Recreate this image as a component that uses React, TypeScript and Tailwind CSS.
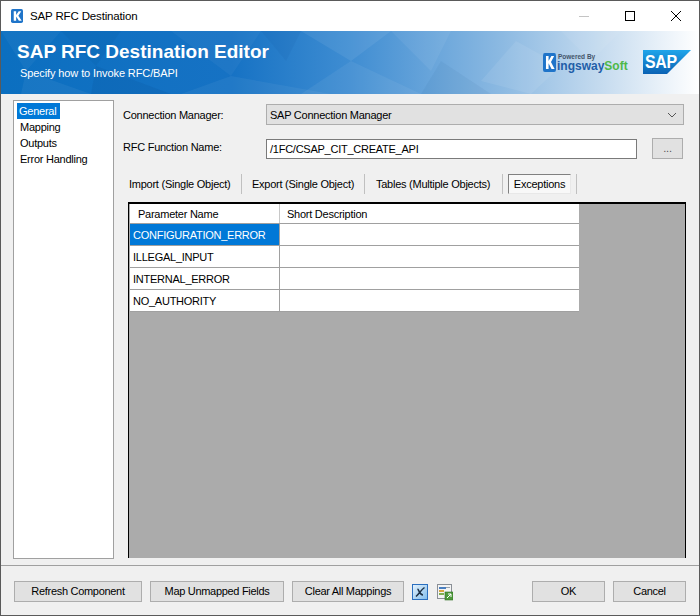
const font = "font-['Liberation_Sans',sans-serif]";

function Btn({ w, children }: { w: string; children: React.ReactNode }) {
  return (
    <button className={`${w} h-[21px] shrink-0 bg-[#e1e1e1] border border-[#adadad] text-[11px] tracking-[-0.3px] leading-[17px] text-black`}>
      {children}
    </button>
  );
}

function BannerArt() {
  return (
    <svg className="absolute inset-0" width="698" height="63" viewBox="0 0 698 63" preserveAspectRatio="none">
      <defs>
        <linearGradient id="bg" x1="0" x2="1" y1="0" y2="0">
          <stop offset="0" stopColor="#0b6fc0" />
          <stop offset="0.33" stopColor="#1672c4" />
          <stop offset="0.5" stopColor="#3f8dd2" />
          <stop offset="0.72" stopColor="#8dbae2" />
          <stop offset="0.86" stopColor="#c5dbef" />
          <stop offset="1" stopColor="#ffffff" />
        </linearGradient>
      </defs>
      <rect width="698" height="63" fill="url(#bg)" />
      <g fill="#ffffff">
        <polygon points="0,0 60,0 25,40" opacity="0.04" />
        <polygon points="25,40 90,63 20,63" opacity="0.05" />
        <polygon points="170,0 260,0 230,45" opacity="0.04" />
        <polygon points="230,45 330,63 180,63" opacity="0.05" />
        <polygon points="300,0 350,30 390,0" opacity="0.07" />
        <polygon points="350,30 420,63 300,63" opacity="0.06" />
        <polygon points="390,0 450,0 430,40" opacity="0.06" />
        <polygon points="515,10 560,35 530,63 480,50" opacity="0.08" />
        <polygon points="560,0 620,0 590,30" opacity="0.06" />
      </g>
      <g fill="#003a7a">
        <polygon points="60,0 120,0 95,35" opacity="0.08" />
        <polygon points="95,35 170,63 90,63" opacity="0.1" />
        <polygon points="260,0 300,0 285,30" opacity="0.06" />
        <polygon points="440,30 490,63 420,63" opacity="0.05" />
      </g>
    </svg>
  );
}

function KLogo({ w, h }: { w: number; h: number }) {
  return (
    <svg width={w} height={h} viewBox="0 0 14 16" preserveAspectRatio="none" className="shrink-0">
      <rect x="0" y="0" width="14" height="16" rx="2" fill="#1f74c9" />
      <path d="M3.2 2.5h2.8v4.3l3-4.3h3L8.6 7.6l3.9 5.9H9.2L6 8.6v4.9H3.2z" fill="#fff" />
    </svg>
  );
}

function SapLogo() {
  return (
    <svg width="48" height="24" viewBox="0 0 48 24">
      <defs>
        <linearGradient id="sap" x1="0" x2="0" y1="0" y2="1">
          <stop offset="0" stopColor="#1fa5ea" />
          <stop offset="1" stopColor="#0a62b4" />
        </linearGradient>
      </defs>
      <polygon points="0,0 48,0 24,24 0,24" fill="url(#sap)" />
      <text x="2" y="18" fontFamily="Liberation Sans" fontWeight="700" fontSize="18" textLength="32" lengthAdjust="spacingAndGlyphs" fill="#fff">SAP</text>
    </svg>
  );
}

const rows = ["CONFIGURATION_ERROR", "ILLEGAL_INPUT", "INTERNAL_ERROR", "NO_AUTHORITY"];
const body = "text-[11px] tracking-[-0.25px]";

export default function App() {
  return (
    <div className={`w-[700px] h-[616px] bg-[#f0f0f0] border border-[#5a5a5a] flex flex-col overflow-hidden text-black ${body} ${font}`}>
      <div className="h-[30px] bg-white flex items-center shrink-0 relative">
        <div className="ml-[10px] mr-[7px]"><KLogo w={12} h={14} /></div>
        <span className="text-[11.5px] tracking-[-0.15px] pt-[1px]">SAP RFC Destination</span>
        <div className="ml-auto flex items-center h-full">
          <div className="w-[46px] flex justify-center"><div className="w-[10px] h-px bg-[#c4c4c4]" /></div>
          <div className="w-[46px] flex justify-center"><div className="w-[10px] h-[10px] border border-black" /></div>
          <div className="w-[46px] flex justify-center">
            <svg width="10" height="10" viewBox="0 0 10 10"><path d="M0 0L10 10M10 0L0 10" stroke="#000" strokeWidth="1" /></svg>
          </div>
        </div>
      </div>

      <div className="h-[63px] relative shrink-0 overflow-hidden">
        <BannerArt />
        <div className="relative pl-[16px] pt-[10px] text-white tracking-normal">
          <div className="font-bold text-[19px] leading-[22px]">SAP RFC Destination Editor</div>
          <div className="pl-[3px] text-[11px] tracking-[-0.1px] leading-[16px] mt-[2px]">Specify how to Invoke RFC/BAPI</div>
        </div>
        <div className="absolute left-[542px] top-[22px] flex items-end tracking-normal">
          <KLogo w={13} h={19} />
          <div className="ml-[1px] flex flex-col font-bold">
            <span className="pl-[1px] text-[6.5px] leading-[7px] text-[#44546a]">Powered By</span>
            <span className="text-[12px] leading-[12px] text-[#1f5ea8]">ingsway<span className="text-[#4fb848]">Soft</span></span>
          </div>
        </div>
        <div className="absolute left-[642px] top-[19px]"><SapLogo /></div>
      </div>

      <div className="flex-1 min-h-0 flex px-[12px] pt-[6px]">
        <div className="w-[101px] h-[459px] shrink-0 bg-white border border-[#a0a0a0] pl-[3px] pt-[2px] flex flex-col items-start">
          <div className="h-[16px] leading-[16px] bg-[#0078d7] text-white pl-[2px] pr-[4px]">General</div>
          <div className="h-[16px] leading-[16px] pl-[3px]">Mapping</div>
          <div className="h-[16px] leading-[16px] pl-[3px]">Outputs</div>
          <div className="h-[16px] leading-[16px] pl-[3px]">Error Handling</div>
        </div>

        <div className="flex-1 min-w-0 ml-[14px] flex flex-col">
          <div className="flex items-center h-[21px] mt-[4px]">
            <span className="w-[143px] -ml-[5px] shrink-0 pt-[1px]">Connection Manager:</span>
            <div className="w-[418px] h-[21px] bg-[#e1e1e1] border border-[#adadad] flex items-center pl-[3px] pr-[6px]">
              <span className="flex-1 pt-[1px]">SAP Connection Manager</span>
              <svg width="10" height="6" viewBox="0 0 10 6"><path d="M1 1L5 5L9 1" fill="none" stroke="#555" strokeWidth="1" /></svg>
            </div>
          </div>

          <div className="flex items-center h-[21px] mt-[13px]">
            <span className="w-[143px] -ml-[5px] shrink-0 -mt-[3px]">RFC Function Name:</span>
            <div className="w-[371px] h-[20px] mt-[1px] bg-white border border-[#7a7a7a] flex items-center pl-[3px]">/1FC/CSAP_CIT_CREATE_API</div>
            <button className="ml-[15px] -mt-[1px] w-[31px] h-[21px] bg-[#e1e1e1] border border-[#adadad] text-[#555] text-[11px] leading-[16px]">...</button>
          </div>

          <div className="flex items-stretch h-[20px] mt-[15px] whitespace-nowrap">
            <div className="flex items-center pl-[1px] w-[114px] border-r border-[#c0c0c0]">Import (Single Object)</div>
            <div className="flex items-center pl-[10px] w-[123px] border-r border-[#c0c0c0]">Export (Single Object)</div>
            <div className="flex items-center pl-[11px] w-[138px] border-r border-[#c0c0c0]">Tables (Multiple Objects)</div>
            <div className="ml-[5px] flex items-center justify-center w-[63px] bg-[#f8f8f8] border border-[#808080] border-r-[#e8e8e8] border-b-[#e8e8e8] pt-[1px]">Exceptions</div>
            <div className="ml-[5px] w-px bg-[#c0c0c0]" />
          </div>

          <div className="mt-[8px] w-[558px] h-[356px] bg-[#ababab] border-t-2 border-x border-black pl-[1px]">
            <div className="w-[449px] bg-white">
              <div className="flex h-[20px] border-b border-[#a0a0a0]">
                <div className="w-[150px] pl-[8px] leading-[20px] border-r border-[#c8c8c8]">Parameter Name</div>
                <div className="pl-[7px] leading-[20px]">Short Description</div>
              </div>
              {rows.map((r, i) => (
                <div key={r} className="flex h-[22px] border-b border-[#a0a0a0]">
                  <div className={`w-[150px] pl-[3px] leading-[22px] border-r border-[#a0a0a0] ${i === 0 ? "bg-[#0078d7] text-white" : ""}`}>{r}</div>
                  <div className="flex-1" />
                </div>
              ))}
            </div>
          </div>
        </div>
      </div>

      <div className="h-px bg-[#a0a0a0] shrink-0 mb-[15px]" />
      <div className="flex items-center h-[21px] px-[13px] mb-[13px] shrink-0">
        <Btn w="w-[128px]">Refresh Component</Btn>
        <div className="w-[8px]" />
        <Btn w="w-[134px]">Map Unmapped Fields</Btn>
        <div className="w-[8px]" />
        <Btn w="w-[112px]">Clear All Mappings</Btn>
        <div className="w-[8px]" />
        <svg width="16" height="16" viewBox="0 0 16 16" className="shrink-0 mt-[1px]">
          <defs>
            <linearGradient id="xb" x1="0" x2="1" y1="0" y2="1">
              <stop offset="0" stopColor="#e6f3fd" />
              <stop offset="1" stopColor="#7fbcec" />
            </linearGradient>
          </defs>
          <rect x="0.5" y="0.5" width="15" height="15" fill="url(#xb)" stroke="#2a6fc0" />
          <path d="M4 12.5C7 10 9 6 12.5 3.5M5.5 5C7 5.5 7.5 11 11 11" fill="none" stroke="#1d3146" strokeWidth="1.5" />
        </svg>
        <div className="w-[9px]" />
        <svg width="16" height="17" viewBox="0 0 16 17" className="shrink-0 mt-[1px]">
          <rect x="0.5" y="0.5" width="14" height="14" fill="#f4f4f4" stroke="#8a8f96" />
          <rect x="2" y="3" width="7" height="2" fill="#4a7fc0" />
          <rect x="2" y="6" width="5" height="2" fill="#d9a441" />
          <rect x="2" y="9" width="5" height="2" fill="#7fb04f" />
          <rect x="9" y="3" width="4" height="1" fill="#9aa3ad" />
          <rect x="8" y="8" width="8" height="8" fill="#4f9a3c" stroke="#2f6f24" strokeWidth="0.6" />
          <path d="M10 14L14 10M11 10h3v3" fill="none" stroke="#fff" strokeWidth="1" />
        </svg>
        <div className="flex-1" />
        <Btn w="w-[73px]">OK</Btn>
        <div className="w-[8px]" />
        <Btn w="w-[73px]">Cancel</Btn>
      </div>
    </div>
  );
}
